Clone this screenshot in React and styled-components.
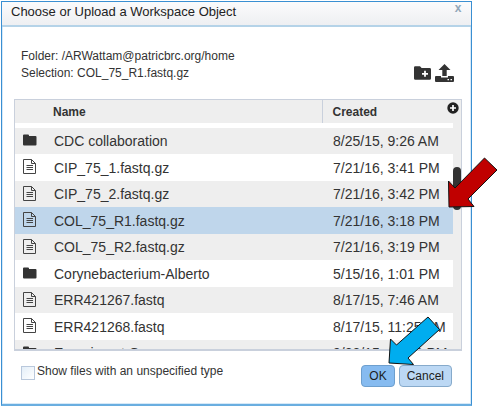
import React, { useState } from "react";
import styled, { createGlobalStyle, css } from "styled-components";

const GlobalStyle = createGlobalStyle`
  *, *::before, *::after { box-sizing: border-box; }
  body {
    margin: 0;
    background: #fff;
    color: #333;
    font-family: "Liberation Sans", Arial, sans-serif;
    font-size: 12px;
  }
`;

const Dialog = styled.section`
  position: relative;
  margin: 1px 29px 0 1px;
  border: 1px solid #3a8fd2;
  border-bottom: 2px solid #6aaee0;
  background: #fff;
  box-shadow: inset 0 0 0 1px #d6e9f8;
`;

const TitleBar = styled.header`
  display: flex;
  align-items: flex-start;
  justify-content: space-between;
  height: 25px;
  padding: 0 8px 0 9px;
  border-bottom: 2px solid #b5d3e8;
  background: linear-gradient(#fbfbfc, #eeeff2);
`;

const Title = styled.h1`
  margin: 0;
  color: #222;
  font-size: 13px;
  font-weight: 400;
  line-height: 20px;
`;

const CloseButton = styled.button`
  width: 10px;
  height: 12px;
  padding: 0;
  border: 0;
  background: none;
  color: #91a7b9;
  font: bold 12px/10px "Liberation Sans", Arial, sans-serif;
`;

const Content = styled.div`
  padding: 21px 9px 17px 12px;
`;

const Summary = styled.div`
  display: flex;
  justify-content: space-between;
  align-items: flex-end;
  padding: 0 8px 0 7px;
  margin-bottom: 17px;
`;

const Location = styled.div`
  line-height: 17px;
`;

const Actions = styled.div`
  display: flex;
  align-items: center;
  gap: 4px;
`;

const IconButton = styled.button`
  display: block;
  padding: 0;
  border: 0;
  background: none;
  color: #333;
  line-height: 0;
`;

const GridFrame = styled.div`
  position: relative;
  height: 252px;
  overflow: hidden;
  border: 1px solid #c9d0dc;
  border-bottom-width: 2px;
`;

const FileTable = styled.table`
  width: 100%;
  table-layout: fixed;
  border-collapse: collapse;
`;

const HeadCell = styled.th`
  width: ${(p) => p.$width || "auto"};
  height: 23px;
  padding: 0 10px;
  border-left: ${(p) => (p.$divided ? "1px solid #c9d0dc" : "0")};
  background: #eee;
  font-size: 12px;
  text-align: left;
`;

const ScrolledRow = styled.tr`
  height: 5px;
`;

const FileRow = styled.tr`
  height: 26px;
  background: ${(p) => (p.$selected ? "#bfd6eb" : p.$shaded ? "#eee" : "#fff")};
  &:nth-child(odd) { height: 27px; }
`;

const Cell = styled.td`
  padding: 0 10px 0 11px;
  font-size: 14px;
  line-height: 26px;
  white-space: nowrap;
  ${(p) => p.$icon && css`
    padding: 0 0 2px 8px;
    line-height: 0;
  `}
`;

const ColumnsButton = styled(IconButton)`
  position: absolute;
  top: 2px;
  right: 2px;
`;

const ScrollTrack = styled.div`
  position: absolute;
  top: 23px;
  right: 0;
  bottom: 0;
  width: 8px;
  background: #eee;
`;

const ScrollThumb = styled.div`
  height: 43px;
  margin-top: 44px;
  border-radius: 4px;
  background: #333;
`;

const Footer = styled.footer`
  display: flex;
  align-items: flex-start;
  justify-content: space-between;
  padding: 14px 10px 0 7px;
`;

const CheckLabel = styled.label`
  display: flex;
  gap: 2px;
  line-height: 13px;
`;

const CheckBox = styled.input`
  appearance: none;
  width: 14px;
  height: 14px;
  margin: 1px 0 0;
  border: 1px solid #b9c8dc;
  background: linear-gradient(135deg, #e3eef8, #fff);
  &:checked { background: #86bbf0; }
`;

const ButtonGroup = styled.div`
  display: flex;
  gap: 4px;
`;

const Button = styled.button`
  height: 22px;
  padding: 0 7px;
  border: 1px solid ${(p) => (p.$primary ? "#6d9fce" : "#86aacb")};
  border-radius: 4px;
  background: ${(p) => (p.$primary ? "#86bbf0" : "#bcd8f4")};
  color: #1c1c1c;
  font: 12px "Liberation Sans", Arial, sans-serif;
`;

const Pointer = styled.svg`
  position: absolute;
  right: ${(p) => p.$right}px;
  bottom: ${(p) => p.$bottom}px;
  pointer-events: none;
  stroke: #111;
  stroke-width: 1;
`;

const FolderIcon = () => (
  <svg width="14" height="12" viewBox="0 0 14 12" fill="#333" aria-hidden="true">
    <path d="M0 1.5Q0 .5 1 .5H5Q6 .5 6 1.5V2H12.5Q13.5 2 13.5 3V10.5Q13.5 11.5 12.5 11.5H1Q0 11.5 0 10.5Z" />
  </svg>
);

const FileIcon = () => (
  <svg width="14" height="15" viewBox="0 0 14 15" fill="none" stroke="#444" aria-hidden="true">
    <path d="M.5 .5H8.5L12.5 4.500V14.5H.5ZM8.5 .5V4.5H12.5M3.500 6.5H10M3.500 8.5H10M3.500 10.5H10" />
  </svg>
);

const NewFolderIcon = () => (
  <svg width="17" height="14" viewBox="0 0 17 14" aria-hidden="true">
    <path fill="#333" d="M0 1.5Q0 .3 1.2 .3H6L7.6 2H15.6Q17 2 17 3.4V12.4Q17 13.7 15.6 13.7H1.4Q0 13.7 0 12.4Z" />
    <path stroke="#fff" strokeWidth="1.8" d="M8 7.8H14M11 4.8V10.8" />
  </svg>
);

const UploadIcon = () => (
  <svg width="19" height="18" viewBox="0 0 19 18" aria-hidden="true">
    <path fill="#333" d="M9.5 0L15.5 6H11.7V12H7.3V6H3.5ZM1 12H6V13.5H13V12H18Q19 12 19 13V17Q19 18 18 18H1Q0 18 0 17V13Q0 12 1 12Z" />
    <path fill="#fff" d="M12.5 15H14V16.3H12.5ZM15.5 15H17V16.3H15.5Z" />
  </svg>
);

const PlusIcon = () => (
  <svg width="12" height="12" viewBox="0 0 12 12" aria-hidden="true">
    <circle cx="6" cy="6" r="5.7" fill="#222" />
    <path stroke="#fff" strokeWidth="1.7" d="M3 6H9M6 3V9" />
  </svg>
);

const files = [
  { name: "CDC collaboration", created: "8/25/15, 9:26 AM", folder: true, shaded: true },
  { name: "CIP_75_1.fastq.gz", created: "7/21/16, 3:41 PM" },
  { name: "CIP_75_2.fastq.gz", created: "7/21/16, 3:42 PM", shaded: true },
  { name: "COL_75_R1.fastq.gz", created: "7/21/16, 3:18 PM" },
  { name: "COL_75_R2.fastq.gz", created: "7/21/16, 3:19 PM", shaded: true },
  { name: "Corynebacterium-Alberto", created: "5/15/16, 1:01 PM", folder: true },
  { name: "ERR421267.fastq", created: "8/17/15, 7:46 AM", shaded: true },
  { name: "ERR421268.fastq", created: "8/17/15, 11:25 AM" },
  { name: "Experiment Groups", created: "9/22/15, 12:22 PM", folder: true, shaded: true },
];

export default function App() {
  const [selected, setSelected] = useState("COL_75_R1.fastq.gz");
  return (
    <>
      <GlobalStyle />
      <Dialog role="dialog" aria-labelledby="dialog-title">
        <TitleBar>
          <Title id="dialog-title">Choose or Upload a Workspace Object</Title>
          <CloseButton aria-label="Close">x</CloseButton>
        </TitleBar>
        <Content>
          <Summary>
            <Location>
              <div>Folder: /ARWattam@patricbrc.org/home</div>
              <div>Selection: {selected}</div>
            </Location>
            <Actions>
              <IconButton aria-label="New folder"><NewFolderIcon /></IconButton>
              <IconButton aria-label="Upload"><UploadIcon /></IconButton>
            </Actions>
          </Summary>
          <GridFrame>
            <FileTable>
              <thead>
                <tr>
                  <HeadCell $width="28px" aria-label="Type" />
                  <HeadCell>Name</HeadCell>
                  <HeadCell $width="139px" $divided>Created</HeadCell>
                </tr>
              </thead>
              <tbody>
                <ScrolledRow aria-hidden="true"><td colSpan={3} /></ScrolledRow>
                {files.map((f) => (
                  <FileRow
                    key={f.name}
                    $shaded={f.shaded}
                    $selected={f.name === selected}
                    onClick={() => setSelected(f.name)}
                  >
                    <Cell $icon>{f.folder ? <FolderIcon /> : <FileIcon />}</Cell>
                    <Cell>{f.name}</Cell>
                    <Cell>{f.created}</Cell>
                  </FileRow>
                ))}
              </tbody>
            </FileTable>
            <ScrollTrack><ScrollThumb /></ScrollTrack>
            <ColumnsButton aria-label="Choose columns"><PlusIcon /></ColumnsButton>
          </GridFrame>
          <Footer>
            <CheckLabel>
              <CheckBox type="checkbox" />
              Show files with an unspecified type
            </CheckLabel>
            <ButtonGroup>
              <Button $primary>OK</Button>
              <Button>Cancel</Button>
            </ButtonGroup>
          </Footer>
        </Content>
        <Pointer width="50" height="51" viewBox="0 0 50 51" fill="#c00000" $right={-27} $bottom={196}>
          <path d="M1 50L.5 24L7 31L36.5 1L49 13L20 42L26 49.5Z" />
        </Pointer>
        <Pointer width="52" height="49" viewBox="0 0 52 49" fill="#00adef" $right={31} $bottom={39}>
          <path d="M1 47L2.500 23L8.500 29L40 1L51.500 13.500L20 42L25.500 48.500Z" />
        </Pointer>
      </Dialog>
    </>
  );
}
